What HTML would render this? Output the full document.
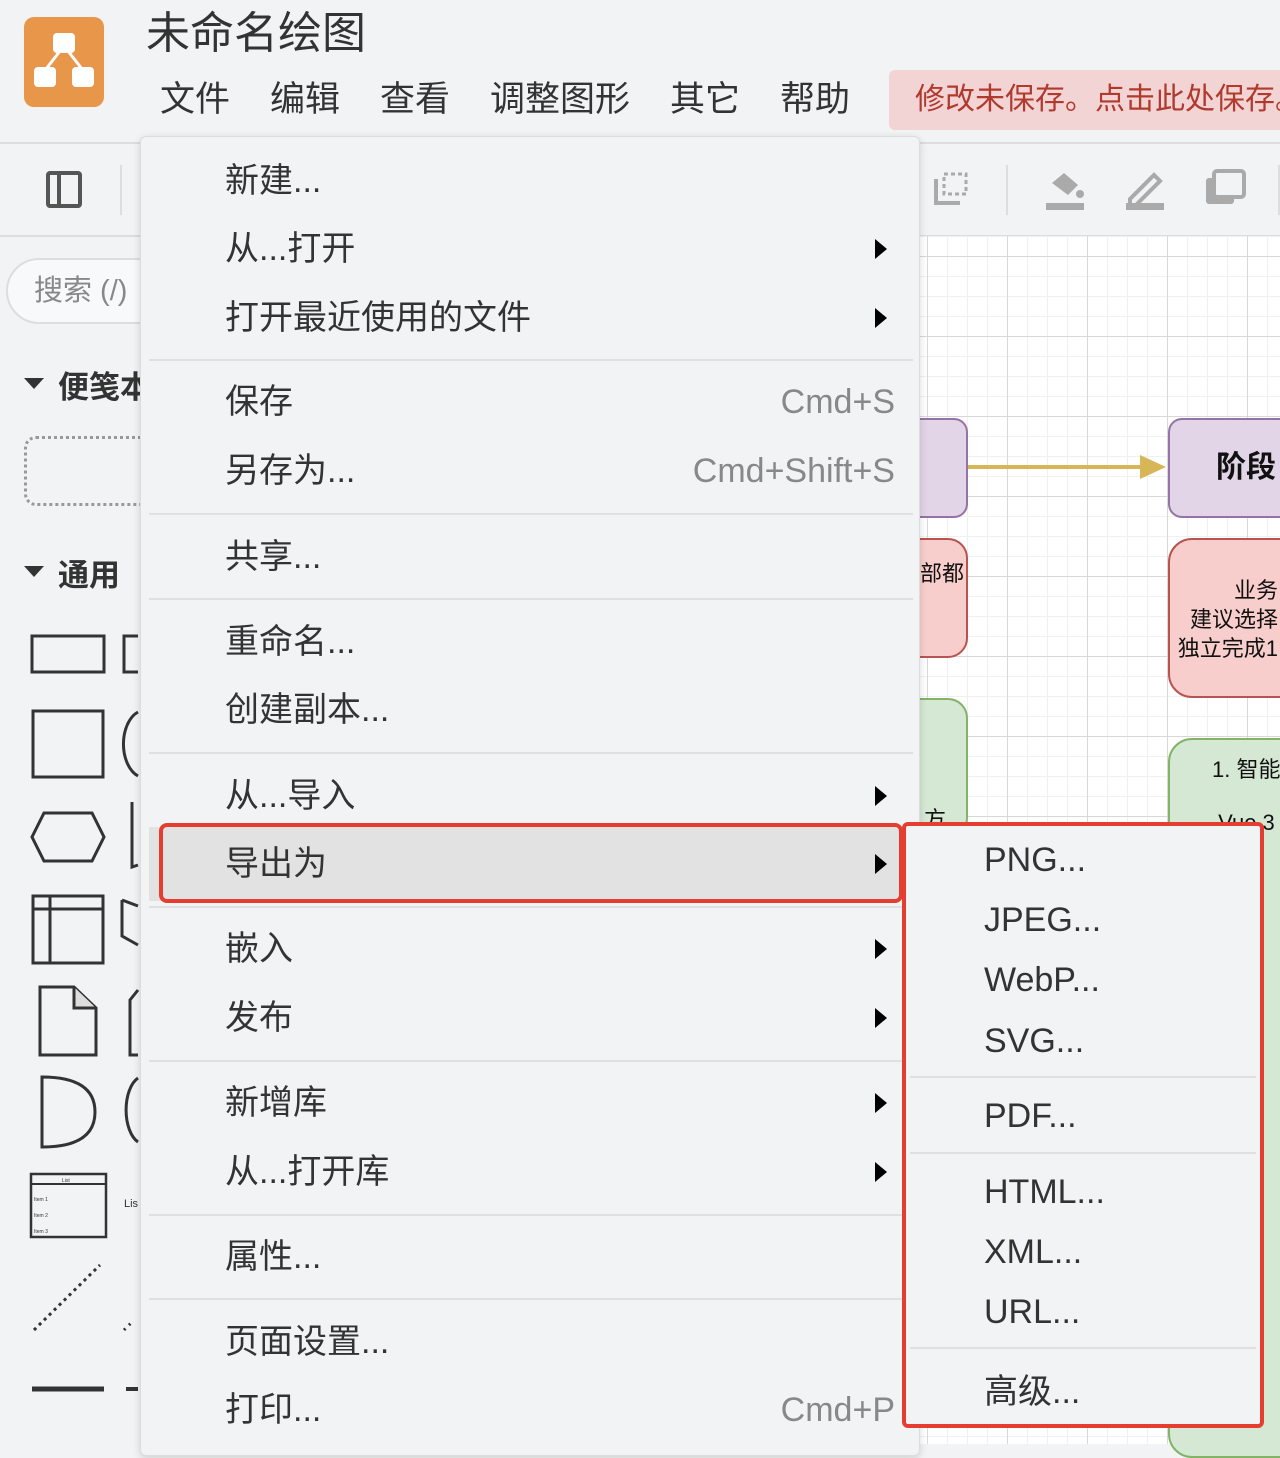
<!DOCTYPE html>
<html><head><meta charset="utf-8"><style>
*{margin:0;padding:0;box-sizing:border-box}
body{width:1280px;height:1444px;overflow:hidden;background:#f1f3f5;font-family:"Liberation Sans","Noto Sans CJK SC",sans-serif;color:#333;position:relative}
.a{position:absolute}
.canvas{left:920px;top:236px;width:360px;height:1208px;background-color:#fff;
background-image:linear-gradient(#d8d8d8 1px,transparent 1px),linear-gradient(90deg,#d8d8d8 1px,transparent 1px),linear-gradient(#f0f0f0 1px,transparent 1px),linear-gradient(90deg,#f0f0f0 1px,transparent 1px);
background-size:80px 80px,80px 80px,20px 20px,20px 20px;background-position:7px 20px,7px 20px,7px 0,7px 0}
.menu{left:140px;top:136px;width:780px;height:1320px;background:#f1f3f5;border:1px solid #ddd;border-radius:6px;box-shadow:0 2px 8px rgba(0,0,0,.15)}
.it{position:absolute;left:84px;font-size:34px;line-height:40px;color:#333;white-space:nowrap}
.sc{position:absolute;right:24px;font-size:34px;line-height:40px;color:#888;white-space:nowrap}
.ar{position:absolute;left:734px;width:0;height:0;border-top:10px solid transparent;border-bottom:10px solid transparent;border-left:12px solid #000}
.sep{position:absolute;left:8px;width:764px;height:2px;background:#e0e0e0}
.sub{left:902px;top:822px;width:362px;height:606px;background:#f1f3f5;border:4px solid #e53d2f;border-radius:6px}
.si{position:absolute;left:78px;font-size:34px;line-height:40px;color:#333;white-space:nowrap}
.ss{position:absolute;left:4px;width:346px;height:2px;background:#e0e0e0}
.tm span{position:absolute;white-space:nowrap}
</style></head><body>
<div class="a" style="left:0;top:142px;width:1280px;height:2px;background:#ddd"></div>
<div class="a" style="left:0;top:235px;width:1280px;height:2px;background:#ddd"></div>
<div class="a canvas"></div>
<div class="a" style="left:880px;top:418px;width:88px;height:100px;background:#e1d5e7;border:2px solid #9673a6;border-radius:14px"></div>
<div class="a" style="left:968px;top:465px;width:180px;height:4px;background:#d6b656"></div>
<div class="a" style="left:1140px;top:455px;width:0;height:0;border-top:12px solid transparent;border-bottom:12px solid transparent;border-left:26px solid #d6b656"></div>
<div class="a" style="left:1168px;top:418px;width:140px;height:100px;background:#e1d5e7;border:2px solid #9673a6;border-radius:14px;font-size:30px;font-weight:bold;line-height:96px;padding-left:46px;color:#111">阶段</div>
<div class="a" style="left:880px;top:538px;width:88px;height:120px;background:#f8cecc;border:2px solid #b85450;border-radius:20px;font-size:22px;padding:16px 0 0 38px;color:#111">部都</div>
<div class="a" style="left:1168px;top:538px;width:140px;height:160px;background:#f8cecc;border:2px solid #b85450;border-radius:24px;font-size:22px;line-height:29px;color:#111;padding-top:36px;text-align:right;padding-right:28px;white-space:nowrap;overflow:hidden">&nbsp;&nbsp;&nbsp;业务<br>建议选择<br>独立完成1</div>
<div class="a" style="left:880px;top:698px;width:88px;height:140px;background:#d5e8d4;border:2px solid #82b366;border-radius:20px;font-size:22px;padding:102px 0 0 42px;color:#111;overflow:hidden">方法</div>
<div class="a" style="left:1168px;top:738px;width:140px;height:720px;background:#d5e8d4;border:2px solid #82b366;border-radius:24px;font-size:22px;padding:12px 0 0 42px;color:#111;white-space:nowrap;overflow:hidden">1. 智能<br><br>&nbsp;Vue 3</div>
<div class="a" style="left:24px;top:17px;width:80px;height:90px;background:#e8974a;border-radius:10px">
<svg width="80" height="90" viewBox="0 0 80 90"><rect x="29" y="16" width="22" height="20" rx="4" fill="#fff"/><rect x="10" y="50" width="22" height="20" rx="4" fill="#fff"/><rect x="48" y="50" width="22" height="20" rx="4" fill="#fff"/><path d="M36 34L22 52M44 34L58 52" stroke="#fff" stroke-width="3"/></svg></div>
<div class="a" style="left:146px;top:6px;font-size:44px;line-height:56px;color:#333;white-space:nowrap">未命名绘图</div>
<div class="a tm" style="left:160px;top:78px;font-size:35px;line-height:44px;color:#333">
<span style="left:0">文件</span><span style="left:110px">编辑</span><span style="left:220px">查看</span><span style="left:330px">调整图形</span><span style="left:510px">其它</span><span style="left:620px">帮助</span></div>
<div class="a" style="left:889px;top:70px;width:400px;height:60px;background:#f3d4d4;border-radius:6px;color:#b03a2e;font-size:30px;line-height:60px;padding-left:26px;white-space:nowrap">修改未保存。点击此处保存。</div>
<svg class="a" style="left:44px;top:170px" width="40" height="40" viewBox="0 0 40 40"><rect x="4" y="3" width="32" height="33" rx="2" fill="none" stroke="#555" stroke-width="4"/><path d="M15 3V36" stroke="#555" stroke-width="4"/></svg>
<div class="a" style="left:120px;top:165px;width:2px;height:50px;background:#ddd"></div>
<svg class="a" style="left:930px;top:165px" width="360" height="50" viewBox="0 0 360 50">
<path d="M6 14V38H30" fill="none" stroke="#aaa" stroke-width="4"/><rect x="14" y="9" width="22" height="20" fill="none" stroke="#aaa" stroke-width="3" stroke-dasharray="4 3"/>
<rect x="76" y="0" width="2" height="50" fill="#ddd"/>
<rect x="116" y="38" width="38" height="7" fill="#aaa"/><path d="M122 18L134 8L148 20L138 30Z" fill="#aaa"/><circle cx="150" cy="29" r="4" fill="#aaa"/>
<rect x="196" y="38" width="38" height="7" fill="#aaa"/><path d="M200 34L224 10L230 16L206 40H200Z" fill="none" stroke="#aaa" stroke-width="4"/>
<rect x="276" y="13" width="28" height="26" rx="3" fill="#aaa"/><rect x="284" y="6" width="30" height="26" rx="3" fill="#f1f3f5" stroke="#aaa" stroke-width="4"/>
<rect x="348" y="0" width="2" height="50" fill="#ddd"/></svg>
<div class="a" style="left:6px;top:258px;width:200px;height:66px;border:2px solid #ddd;border-radius:33px;background:#f8f9fa;font-size:29px;line-height:62px;padding-left:26px;color:#888;white-space:nowrap">搜索 (/)</div>
<div class="a" style="left:24px;top:378px;border-left:10px solid transparent;border-right:10px solid transparent;border-top:11px solid #333"></div>
<div class="a" style="left:58px;top:362px;font-size:31px;font-weight:bold;color:#333;white-space:nowrap">便笺本</div>
<div class="a" style="left:24px;top:436px;width:160px;height:70px;border:3px dotted #999;border-radius:12px"></div>
<div class="a" style="left:24px;top:566px;border-left:10px solid transparent;border-right:10px solid transparent;border-top:11px solid #333"></div>
<div class="a" style="left:58px;top:550px;font-size:31px;font-weight:bold;color:#333">通用</div>
<svg class="a" style="left:0;top:600px" width="140" height="844" viewBox="0 0 140 844" fill="none" stroke="#333" stroke-width="3">
<rect x="32" y="36" width="72" height="36"/><path d="M138 36H124V72H138"/>
<rect x="33" y="111" width="70" height="66"/><path d="M138 112A22 34 0 0 0 138 176"/>
<path d="M44 213H92L104 237L92 261H44L32 237Z"/><path d="M132 202V267L138 265"/>
<rect x="33" y="296" width="70" height="67"/><path d="M33 309H103M50 296V363"/><path d="M122 300L138 306M122 300V336L138 345"/>
<path d="M40 387H74L96 408V455H40Z"/><path d="M74 387V408H96" fill="#ddd"/><path d="M138 390L130 400V455H138"/>
<path d="M42 477Q95 477 95 512Q95 547 42 547Z"/><path d="M138 478A18 34 0 0 0 138 542"/>
<rect x="31" y="574" width="75" height="63" stroke-width="2.5"/><path d="M31 584H106" stroke-width="2"/>
<path d="M34 730L100 665" stroke-dasharray="3 4" stroke-width="3"/>
<path d="M32 789H104" stroke-width="5"/><path d="M126 789H138" stroke-width="4"/>
<path d="M124 730L132 722" stroke-dasharray="2 5"/></svg>
<div class="a" style="left:62px;top:1178px;font-size:5px;color:#333">List</div>
<div class="a" style="left:34px;top:1192px;font-size:5px;line-height:16px;color:#333">Item 1<br>Item 2<br>Item 3</div>
<div class="a" style="left:124px;top:1198px;font-size:11px;color:#333">Lis</div>
<div class="a menu">
<div class="it" style="top:24px">新建...</div>
<div class="it" style="top:92px">从...打开</div><div class="ar" style="top:102px"></div>
<div class="it" style="top:161px">打开最近使用的文件</div><div class="ar" style="top:171px"></div>
<div class="sep" style="top:222px"></div>
<div class="it" style="top:245px">保存</div><div class="sc" style="top:245px">Cmd+S</div>
<div class="it" style="top:314px">另存为...</div><div class="sc" style="top:314px">Cmd+Shift+S</div>
<div class="sep" style="top:376px"></div>
<div class="it" style="top:400px">共享...</div>
<div class="sep" style="top:461px"></div>
<div class="it" style="top:485px">重命名...</div>
<div class="it" style="top:553px">创建副本...</div>
<div class="sep" style="top:615px"></div>
<div class="it" style="top:639px">从...导入</div><div class="ar" style="top:649px"></div>
<div style="position:absolute;left:8px;top:690px;width:750px;height:74px;background:#e2e2e2"></div>
<div style="position:absolute;left:18px;top:686px;width:744px;height:80px;border:4px solid #e53d2f;border-radius:8px"></div>
<div class="it" style="top:707px">导出为</div><div class="ar" style="top:717px"></div>
<div class="sep" style="top:769px"></div>
<div class="it" style="top:792px">嵌入</div><div class="ar" style="top:802px"></div>
<div class="it" style="top:861px">发布</div><div class="ar" style="top:871px"></div>
<div class="sep" style="top:923px"></div>
<div class="it" style="top:946px">新增库</div><div class="ar" style="top:956px"></div>
<div class="it" style="top:1015px">从...打开库</div><div class="ar" style="top:1025px"></div>
<div class="sep" style="top:1077px"></div>
<div class="it" style="top:1100px">属性...</div>
<div class="sep" style="top:1161px"></div>
<div class="it" style="top:1185px">页面设置...</div>
<div class="it" style="top:1253px">打印...</div><div class="sc" style="top:1253px">Cmd+P</div>
</div>
<div class="a sub">
<div class="si" style="top:14px">PNG...</div>
<div class="si" style="top:74px">JPEG...</div>
<div class="si" style="top:134px">WebP...</div>
<div class="si" style="top:195px">SVG...</div>
<div class="ss" style="top:250px"></div>
<div class="si" style="top:270px">PDF...</div>
<div class="ss" style="top:326px"></div>
<div class="si" style="top:346px">HTML...</div>
<div class="si" style="top:406px">XML...</div>
<div class="si" style="top:466px">URL...</div>
<div class="ss" style="top:521px"></div>
<div class="si" style="top:546px">高级...</div>
</div>
</body></html>
